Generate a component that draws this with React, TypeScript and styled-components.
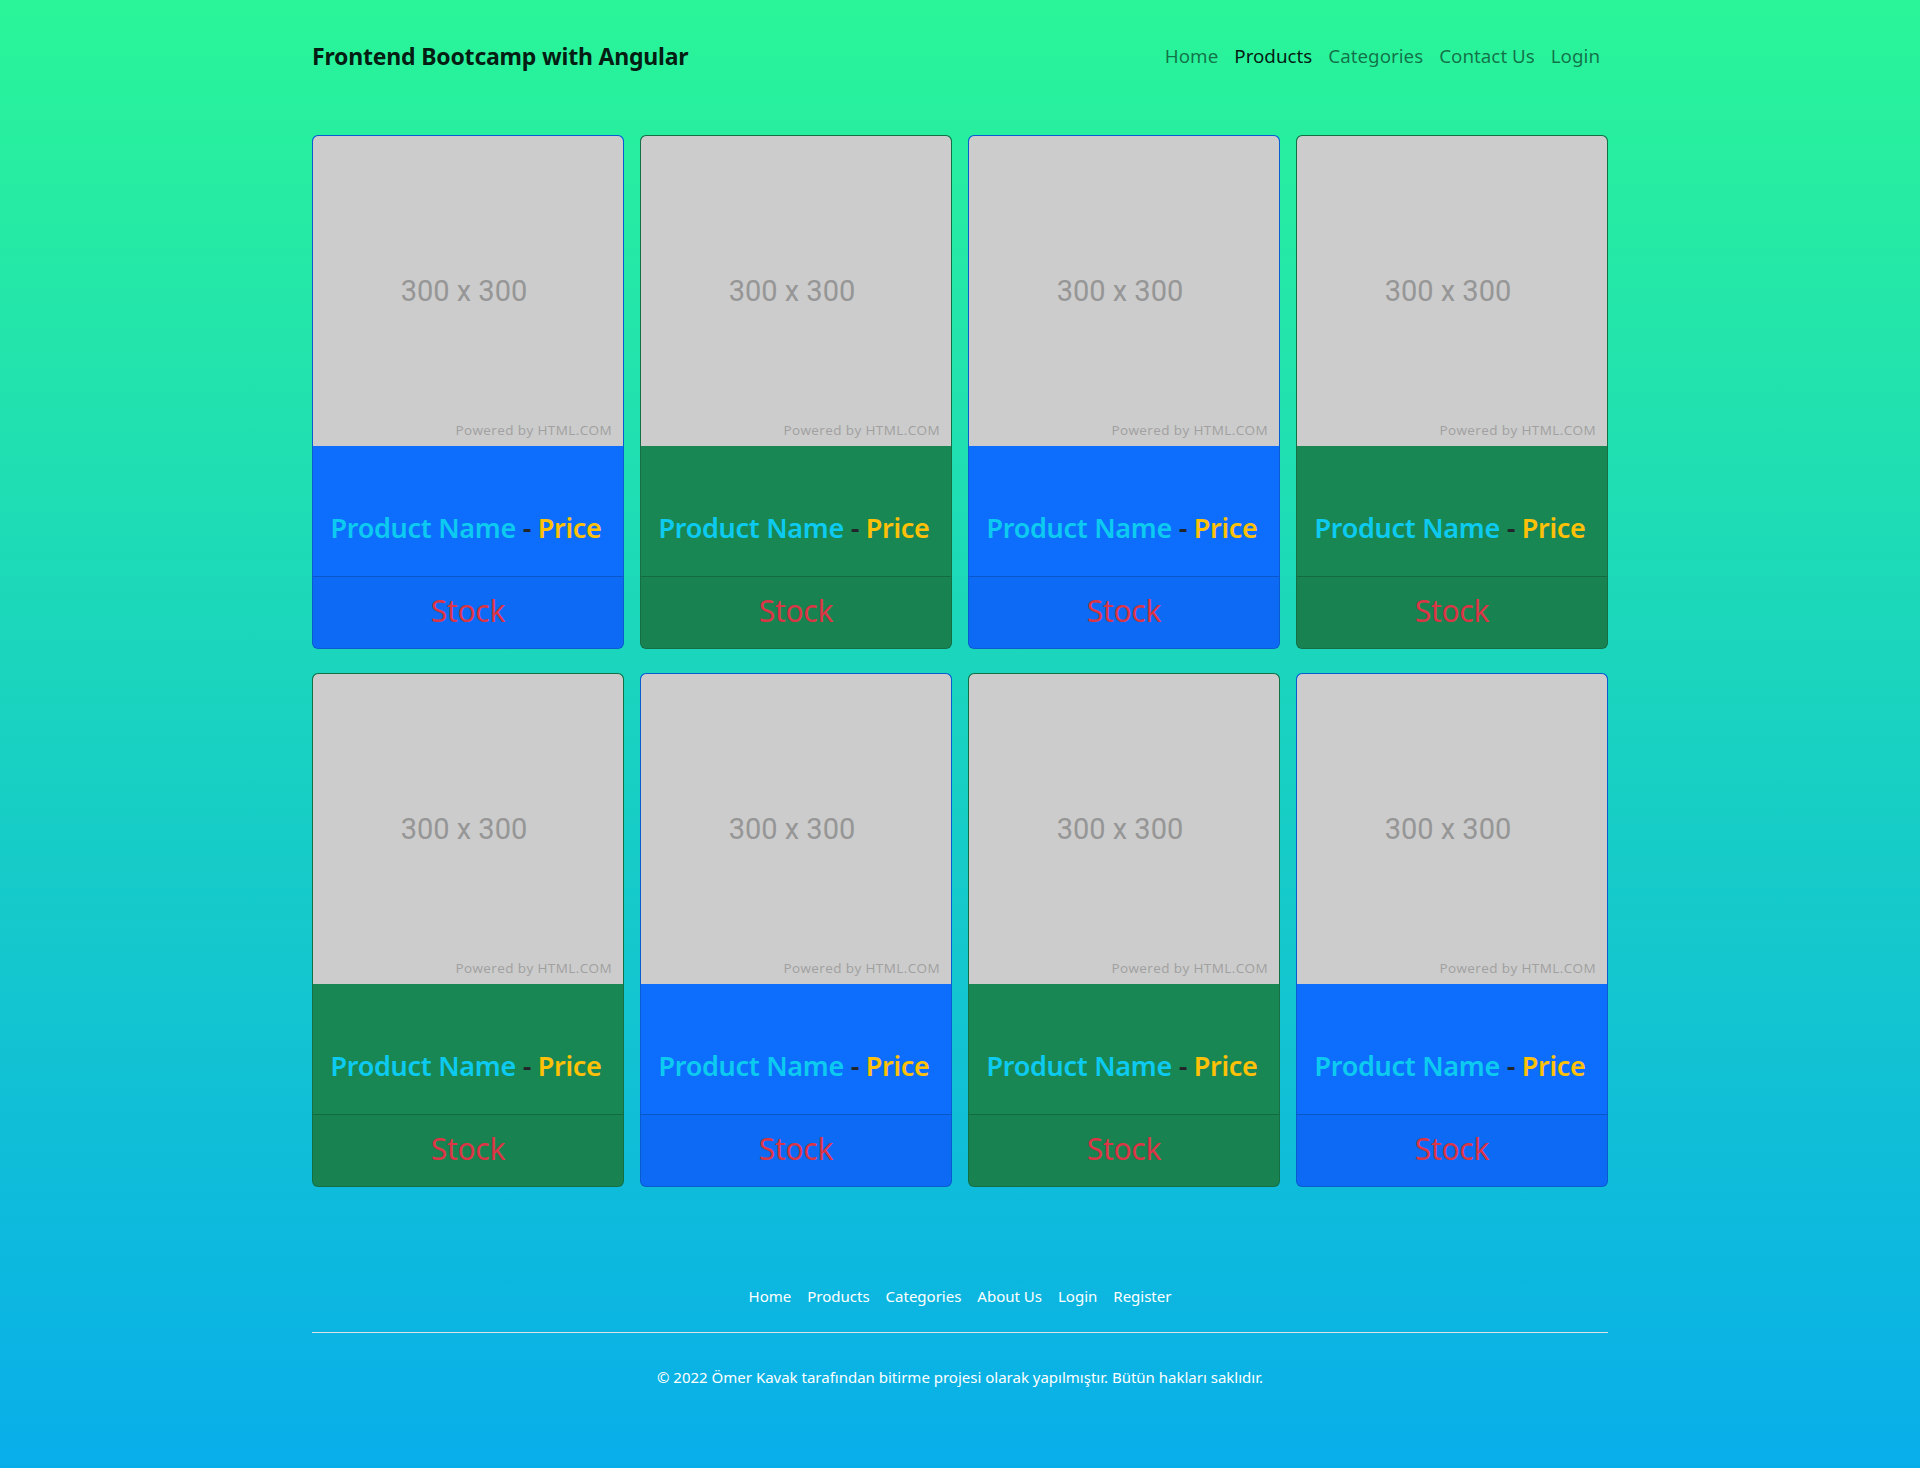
import React from "react";
import styled, { createGlobalStyle } from "styled-components";

const GlobalStyle = createGlobalStyle`
  html, body {
    margin: 0;
    padding: 0;
  }
  body {
    font-family: "Noto Sans", "Open Sans", sans-serif;
    font-size: 16px;
    line-height: 1.5;
    color: #212529;
  }
  * {
    box-sizing: border-box;
  }
`;

const Page = styled.div`
  min-height: 100vh;
  background: linear-gradient(0deg, #08aeea 0%, #2af598 100%);
  padding: 36px 0 80px;
`;

const Container = styled.div`
  width: 1296px;
  margin: 0 auto;
`;

const Navbar = styled.nav`
  display: flex;
  align-items: center;
  justify-content: space-between;
  height: 40px;
`;

const Brand = styled.a`
  font-size: 23px;
  font-weight: 700;
  color: rgba(0, 0, 0, 0.9);
  text-decoration: none;
  letter-spacing: -0.2px;
`;

const NavList = styled.ul`
  display: flex;
  list-style: none;
  margin: 0;
  padding: 0;
`;

const NavLink = styled.a<{ $active?: boolean }>`
  display: block;
  padding: 8px 8px;
  font-size: 18.8px;
  color: ${(p) => (p.$active ? "rgba(0, 0, 0, 0.9)" : "rgba(0, 0, 0, 0.55)")};
  text-decoration: none;
`;

const Grid = styled.div`
  display: grid;
  grid-template-columns: repeat(4, 1fr);
  column-gap: 16px;
  row-gap: 24px;
  margin-top: 59px;
`;

const Card = styled.div<{ $bg: string }>`
  display: flex;
  flex-direction: column;
  background-color: ${(p) => p.$bg};
  border: 1px solid rgba(0, 0, 0, 0.175);
  border-radius: 6px;
  overflow: hidden;
`;

const Placeholder = styled.div`
  position: relative;
  width: 100%;
  aspect-ratio: 1 / 1;
  background: #cccccc;
  border-top-left-radius: 5px;
  border-top-right-radius: 5px;
  display: flex;
  align-items: center;
  justify-content: center;
`;

const PlaceholderSize = styled.span`
  font-family: Roboto, "Liberation Sans", sans-serif;
  font-size: 29px;
  color: #969696;
  margin-top: 2px;
  margin-left: -8px;
`;

const Powered = styled.span`
  position: absolute;
  right: 11px;
  bottom: 6px;
  font-family: "Open Sans", "Noto Sans", sans-serif;
  font-size: 13.5px;
  letter-spacing: 0.4px;
  color: #a0a0a0;
`;

const CardBody = styled.div`
  padding: 64px 8px 31px;
  text-align: center;
`;

const Title = styled.h3`
  margin: 0;
  font-size: 27px;
  font-weight: 600;
  line-height: 35px;
  white-space: nowrap;
  letter-spacing: -0.3px;
  transform: translateX(-2px);
`;

const Name = styled.span`
  color: #0dcaf0;
`;

const Dash = styled.span`
  color: #212529;
`;

const Price = styled.span`
  color: #ffc107;
`;

const CardFooter = styled.div`
  border-top: 1px solid rgba(0, 0, 0, 0.175);
  background-color: rgba(0, 0, 0, 0.03);
  padding: 15px 16px 18px;
  text-align: center;
`;

const Stock = styled.h2`
  margin: 0;
  font-size: 30px;
  font-weight: 400;
  line-height: 38px;
  color: #dc3545;
  letter-spacing: -0.3px;
`;

const Footer = styled.footer`
  margin-top: 89px;
`;

const FooterNav = styled.ul`
  display: flex;
  justify-content: center;
  list-style: none;
  margin: 0;
  padding: 0 0 16px;
  border-bottom: 1px solid #dee2e6;
`;

const FooterLink = styled.a`
  display: block;
  padding: 8px 8px;
  font-size: 15px;
  line-height: 24px;
  color: #ffffff;
  text-decoration: none;
`;

const Copyright = styled.p`
  margin: 32px 0 0;
  text-align: center;
  font-size: 15px;
  line-height: 24px;
  color: #ffffff;
`;

const BLUE = "#0d6efd";
const GREEN = "#198754";

const cards = [BLUE, GREEN, BLUE, GREEN, GREEN, BLUE, GREEN, BLUE];

const navItems = ["Home", "Products", "Categories", "Contact Us", "Login"];
const footerItems = ["Home", "Products", "Categories", "About Us", "Login", "Register"];

export default function App() {
  return (
    <Page>
      <GlobalStyle />
      <Container>
        <Navbar>
          <Brand href="#">Frontend Bootcamp with Angular</Brand>
          <NavList>
            {navItems.map((item) => (
              <li key={item}>
                <NavLink href="#" $active={item === "Products"}>
                  {item}
                </NavLink>
              </li>
            ))}
          </NavList>
        </Navbar>

        <Grid>
          {cards.map((bg, i) => (
            <Card key={i} $bg={bg}>
              <Placeholder>
                <PlaceholderSize>300 x 300</PlaceholderSize>
                <Powered>Powered by HTML.COM</Powered>
              </Placeholder>
              <CardBody>
                <Title>
                  <Name>Product Name</Name> <Dash>-</Dash> <Price>Price</Price>
                </Title>
              </CardBody>
              <CardFooter>
                <Stock>Stock</Stock>
              </CardFooter>
            </Card>
          ))}
        </Grid>

        <Footer>
          <FooterNav>
            {footerItems.map((item) => (
              <li key={item}>
                <FooterLink href="#">{item}</FooterLink>
              </li>
            ))}
          </FooterNav>
          <Copyright>
            © 2022 Ömer Kavak tarafından bitirme projesi olarak yapılmıştır. Bütün hakları saklıdır.
          </Copyright>
        </Footer>
      </Container>
    </Page>
  );
}
